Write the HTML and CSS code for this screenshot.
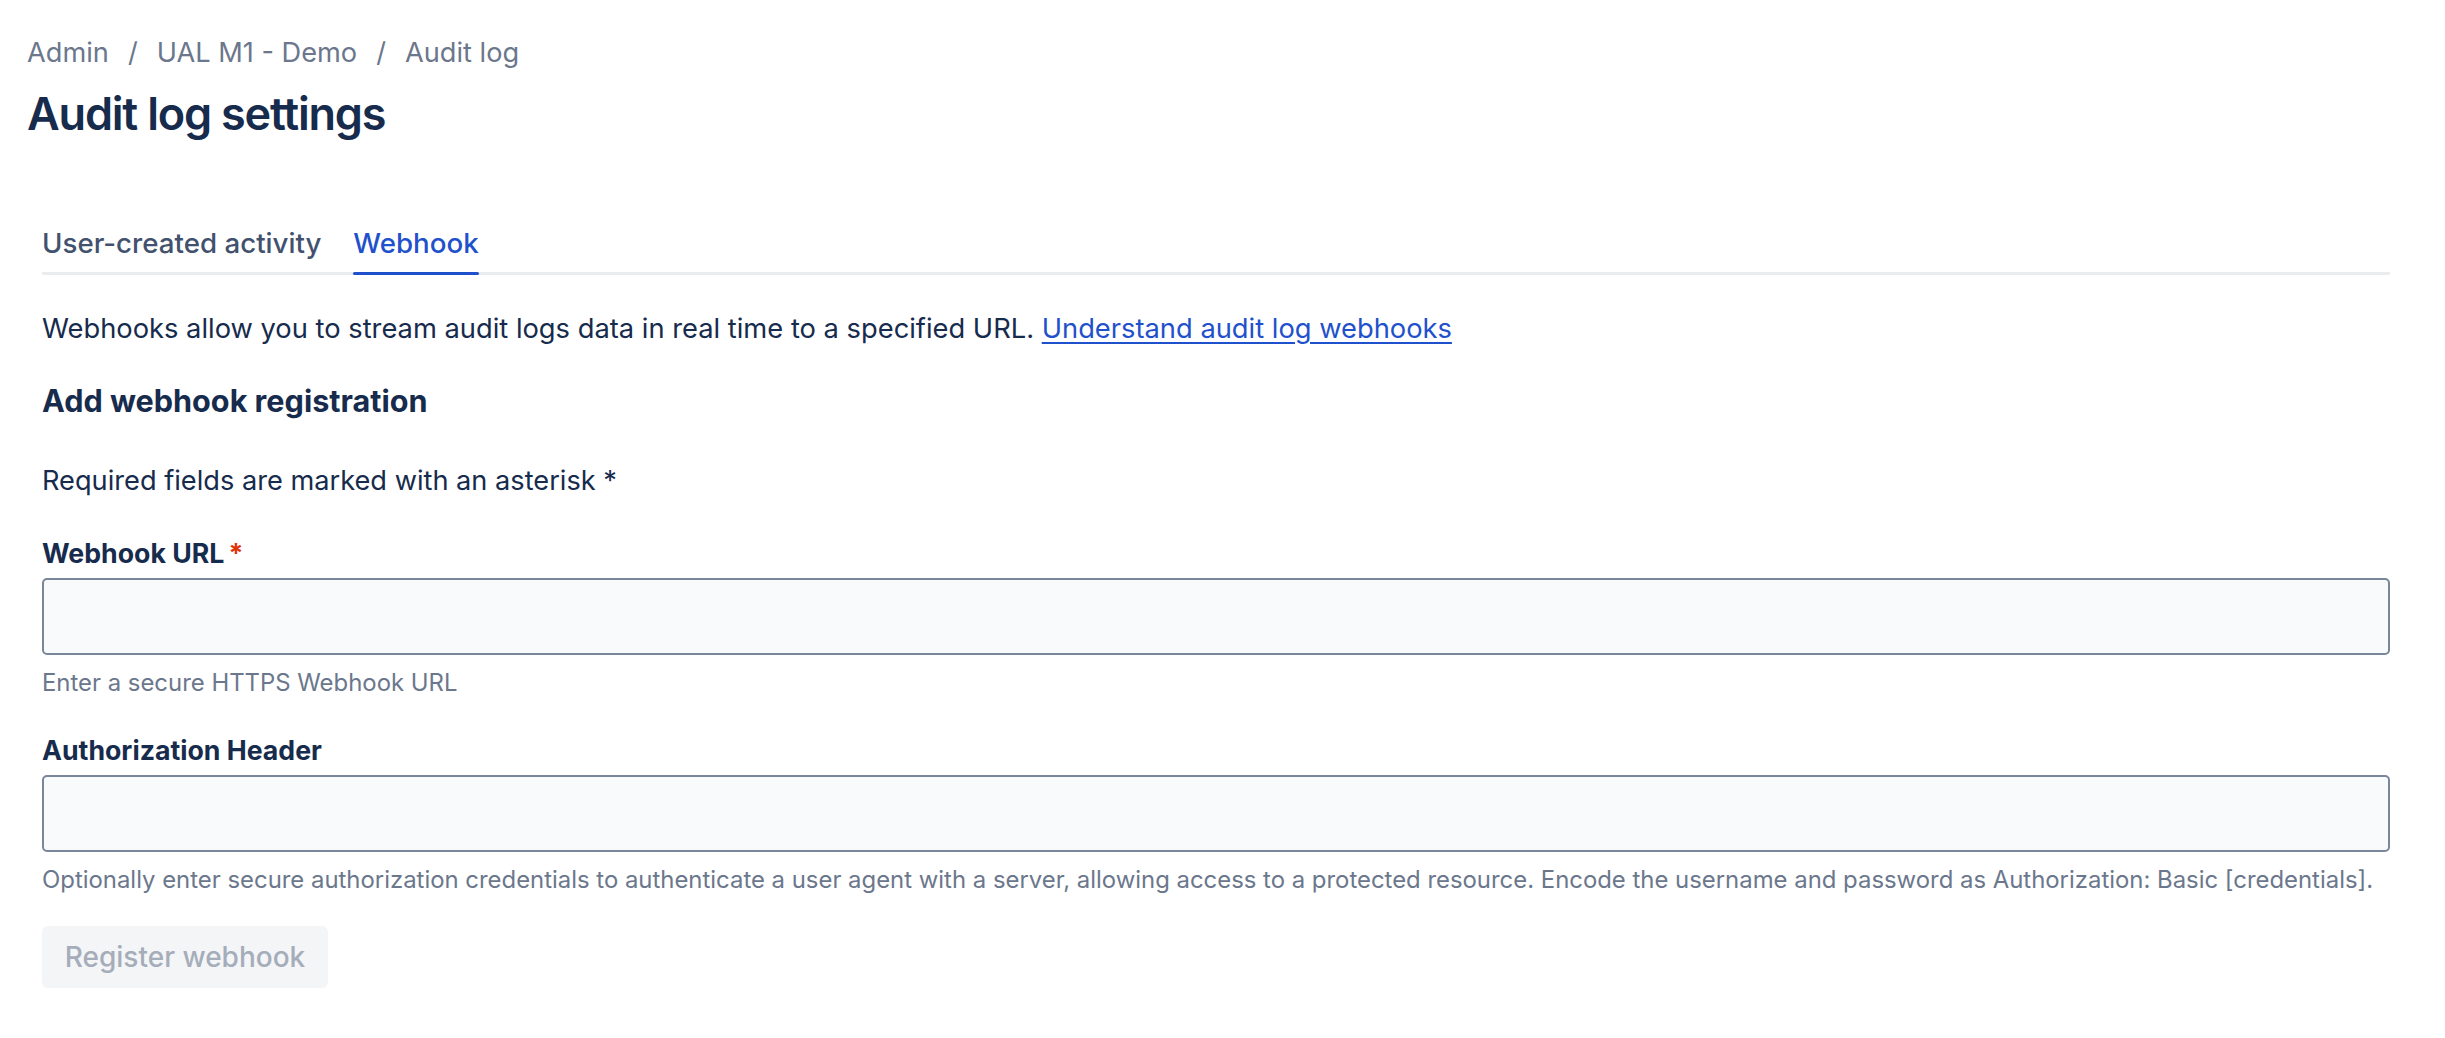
FILE: index.html
```html
<!DOCTYPE html>
<html lang="en">
<head>
<meta charset="utf-8">
<title>Audit log settings</title>
<link rel="stylesheet" href="styles.css">
</head>
<body>
<div class="page">
  <header class="header">
    <nav class="breadcrumbs">
      <span class="crumb">Admin</span><span class="sep">/</span><span class="crumb">UAL M1 - Demo</span><span class="sep">/</span><span class="crumb">Audit log</span>
    </nav>
    <h1 class="title">Audit log settings</h1>
  </header>
  <main class="content">
    <div class="tabs">
      <div class="tab">User-created activity</div>
      <div class="tab tab-active">Webhook</div>
    </div>
    <p class="intro">Webhooks allow you to stream audit logs data in real time to a specified URL. <a class="link" href="#">Understand audit log webhooks</a></p>
    <h2 class="section-title">Add webhook registration</h2>
    <p class="required-note">Required fields are marked with an asterisk *</p>
    <div class="field">
      <label class="label">Webhook URL<span class="asterisk">*</span></label>
      <div class="input"></div>
      <div class="helper">Enter a secure HTTPS Webhook URL</div>
    </div>
    <div class="field field-2">
      <label class="label">Authorization Header</label>
      <div class="input"></div>
      <div class="helper">Optionally enter secure authorization credentials to authenticate a user agent with a server, allowing access to a protected resource. Encode the username and password as Authorization: Basic [credentials].</div>
    </div>
    <div class="button">Register webhook</div>
  </main>
</div>
</body>
</html>
```

FILE: styles.css
```css
* { box-sizing: border-box; }
html, body { margin: 0; padding: 0; background: #ffffff; }
body {
  font-family: Inter, "Noto Sans", "Liberation Sans", sans-serif;
  color: #172B4D;
  width: 2445px;
}
.header { padding: 32px 27px 0 27px; }
.breadcrumbs {
  display: flex;
  align-items: center;
  height: 40px;
  font-size: 27.2px;
  color: #6B778C;
}
.sep { margin: 0 19px; }
.title {
  margin: 14px 0 0 0;
  height: 56px;
  line-height: 56px;
  font-size: 45px;
  font-weight: 600;
  letter-spacing: -1.2px;
  color: #172B4D;
}
.content { padding: 0 55px 0 42px; }
.tabs {
  margin-top: 81px;
  display: flex;
  gap: 32px;
  border-bottom: 3px solid #EBECF0;
}
.tab {
  position: relative;
  height: 49px;
  line-height: 40px;
  font-size: 27.7px;
  font-weight: 500;
  color: #42526E;
}
.tab-active { color: #1F51CC; }
.tab-active::after {
  content: "";
  position: absolute;
  left: 0; right: 0; bottom: -3px;
  height: 3px;
  border-radius: 2px;
  background: #1F51CC;
}
.intro {
  margin: 34px 0 0 0;
  line-height: 40px;
  font-size: 27.3px;
}
.link { color: #1F51CC; text-decoration: underline; text-underline-offset: 4px; }
.section-title {
  margin: 28px 0 0 0;
  line-height: 48px;
  font-size: 30.6px;
  font-weight: 700;
}
.required-note {
  margin: 36px 0 0 0;
  line-height: 40px;
  font-size: 27.2px;
}
.field { margin-top: 36px; }
.field-2 { margin-top: 35px; }
.label {
  display: block;
  line-height: 32px;
  font-size: 26.7px;
  font-weight: 700;
  color: #172B4D;
}
.asterisk { color: #DE350B; margin-left: 4px; }
.input {
  margin-top: 9px;
  height: 77px;
  border: 2px solid #7A869A;
  border-radius: 5px;
  background: #F9FAFB;
}
.helper {
  margin-top: 12px;
  line-height: 32px;
  font-size: 23.9px;
  color: #6B778C;
}
.button {
  margin-top: 30px;
  width: 286px;
  height: 62px;
  display: flex;
  align-items: center;
  justify-content: center;
  border-radius: 6px;
  background: #F4F5F7;
  color: #A5ADBA;
  font-size: 28px;
  font-weight: 500;
}
```
